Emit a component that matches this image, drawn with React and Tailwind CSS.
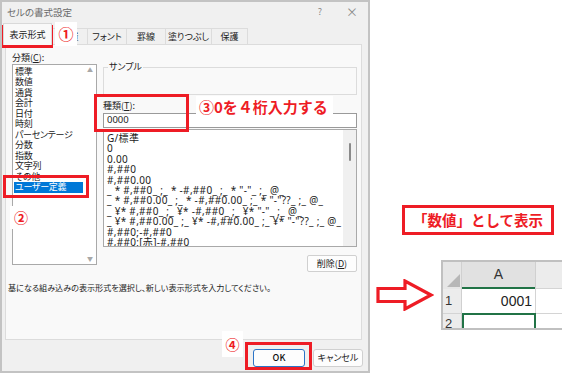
import React from "react";

const JP = "font-['Noto_Sans_CJK_JP','Noto_Sans',sans-serif] [font-feature-settings:'palt']";
const JPF = "font-['Noto_Sans_CJK_JP','Noto_Sans',sans-serif]";

const categories = [
  "標準", "数値", "通貨", "会計", "日付", "時刻", "パーセンテージ",
  "分数", "指数", "文字列", "その他", "ユーザー定義",
];

const formats = [
  "G/標準",
  "0",
  "0.00",
  "#,##0",
  "#,##0.00",
  '_ * #,##0_ ;_ * -#,##0_ ;_ * "-"_ ;_ @_',
  '_ * #,##0.00_ ;_ * -#,##0.00_ ;_ * "-"??_ ;_ @_',
  '_ ¥* #,##0_ ;_ ¥* -#,##0_ ;_ ¥* "-"_ ;_ @_',
  '_ ¥* #,##0.00_ ;_ ¥* -#,##0.00_ ;_ ¥* "-"??_ ;_ @_',
  "#,##0;-#,##0",
  "#,##0;[赤]-#,##0",
];

function Tab({ label, w, active }) {
  if (active) {
    return (
      <div
        className={`${w} h-[22px] relative z-10 -mb-px flex items-center justify-center border border-b-0 border-[#d9d9d9] bg-[#f9f9f9] text-[9px] text-[#222]`}
      >
        {label}
      </div>
    );
  }
  return (
    <div
      className={`${w} h-[16px] flex items-center justify-center border border-l-0 border-b-0 border-[#dcdcdc] bg-[#f0f0f0] text-[9px] text-[#222]`}
    >
      {label}
    </div>
  );
}

function Dialog() {
  return (
    <div className={`w-[370px] h-[373px] shrink-0 border-2 border-[#c3c3c3] bg-[#f0f0f0] flex flex-col ${JP}`}>
      {/* title bar */}
      <div className="h-[20px] flex items-center pl-[5px] pr-[10px] text-[#6a6a6a]">
        <span className="text-[9.5px]">セルの書式設定</span>
        <span className="ml-auto text-[9px] text-[#8a8a8a] mr-[24px]">?</span>
        <span className="text-[12px] text-[#8a8a8a] leading-none">×</span>
      </div>
      {/* tabs */}
      <div className="h-[22px] flex items-end pl-px">
        <Tab label="表示形式" w="w-[49px]" active />
        <Tab label="配置" w="w-[36px]" />
        <Tab label="フォント" w="w-[39px]" />
        <Tab label="罫線" w="w-[39px]" />
        <Tab label="塗りつぶし" w="w-[46px]" />
        <Tab label="保護" w="w-[36px]" />
      </div>
      {/* panel */}
      <div className="ml-[3px] w-[357px] h-[296px] border border-[#dcdcdc] bg-[#f9f9f9] flex flex-col">
        <div className="flex pl-[6px] pt-[7px]">
          {/* left column */}
          <div className="w-[85px] flex flex-col">
            <div className="h-[12px] text-[9px] leading-[12px] text-[#222]">
              分類(<span className="underline">C</span>):
            </div>
            <div className="h-[201px] border border-[#a9a9a9] bg-white flex">
              <div className="flex-1 pt-[1.5px] pl-px">
                {categories.map((c) => (
                  <div
                    key={c}
                    className={`h-[10.5px] leading-[10.5px] text-[9px] tracking-[-0.3px] pl-[1px] ${
                      c === "ユーザー定義" ? "bg-[#0078d7] text-white w-[69px]" : "text-[#222]"
                    }`}
                  >
                    {c}
                  </div>
                ))}
              </div>
              <div className="w-[12px] flex flex-col items-center justify-between py-[2px] text-[6px] text-[#a8a8a8] leading-none">
                <span>▲</span>
                <span>▼</span>
              </div>
            </div>
          </div>
          {/* right column */}
          <div className="ml-[6px] w-[254px] flex flex-col">
            <fieldset className="mt-[10px] h-[33px] border border-[#dcdcdc] px-[3px]">
              <legend className="px-[1px] ml-[1px] text-[9px] leading-[10px] text-[#222]">サンプル</legend>
            </fieldset>
            <div className="mt-[4px] h-[13px] text-[9px] leading-[13px] text-[#222]">
              種類(<span className="underline">T</span>):
            </div>
            <div className="mt-[1px] h-[15px] border border-[#9a9a9a] bg-white flex items-center pl-[3px] text-[9.5px] text-[#222] font-['Noto_Sans',sans-serif]">
              0000
            </div>
            <div className="mt-px h-[118px] border border-[#a9a9a9] bg-white flex overflow-hidden">
              <div className="flex-1 pt-[3px] pl-[3px] overflow-hidden">
                {formats.map((f, i) => (
                  <div
                    key={i}
                    className="h-[10.4px] leading-[10.4px] text-[10px] tracking-[0.3px] whitespace-pre text-[#222] font-['Noto_Sans','Noto_Sans_CJK_JP',sans-serif]"
                  >
                    {f}
                  </div>
                ))}
              </div>
              <div className="w-[13px] bg-[#f0f0f0] flex justify-center pt-[13px]">
                <div className="w-[2px] h-[18px] bg-[#8a8a8a] rounded-full" />
              </div>
            </div>
            <div className="mt-[8px] self-end w-[50px] h-[17px] border border-[#d0d0d0] rounded-[2px] bg-[#fdfdfd] flex items-center justify-center text-[9px] text-[#222]">
              削除(<span className="underline">D</span>)
            </div>
          </div>
        </div>
        <div className="mt-[10px] pl-[2px] text-[8.1px] leading-[11px] text-[#222] whitespace-nowrap">
          基になる組み込みの表示形式を選択し、新しい表示形式を入力してください。
        </div>
      </div>
      {/* buttons */}
      <div className="flex-1 flex justify-end items-start pt-[9px] pr-[5px] gap-[8px]">
        <div className="w-[52px] h-[18px] border border-[#2b74c7] rounded-[3px] bg-[#fdfdfd] flex items-center justify-center text-[9px] font-medium text-[#111]">
          OK
        </div>
        <div className="w-[50px] h-[18px] border border-[#d0d0d0] rounded-[3px] bg-[#fdfdfd] flex items-center justify-center text-[9px] text-[#222]">
          キャンセル
        </div>
      </div>
    </div>
  );
}

function Excel() {
  return (
    <div className="w-[121px] h-[70px] border-2 border-r-0 border-[#c0c0c0] bg-white overflow-hidden font-['Liberation_Sans',sans-serif] text-[#222]">
      {/* header row */}
      <div className="flex h-[27px]">
        <div className="w-[19px] bg-[#e6e6e6] border-r border-[#d0d0d0] relative">
          <svg width="19" height="27" className="block">
            <polygon points="17,12 17,25 4,25" fill="#b7b7b7" />
          </svg>
        </div>
        <div className="w-[73px] bg-[#e1e1e1] border-b-2 border-[#217346] flex items-center justify-center text-[14px] text-[#333]">
          A
        </div>
        <div className="flex-1 bg-[#ececec] border-l border-[#d0d0d0] border-b border-b-[#d4d4d4]" />
      </div>
      {/* row 1 */}
      <div className="flex h-[25px] border-b border-[#d4d4d4]">
        <div className="w-[19px] bg-[#ececec] border-r border-[#d0d0d0] flex items-center pl-[2px] text-[13px] text-[#333]">
          1
        </div>
        <div className="w-[73px] flex items-center justify-end pr-[3px] text-[14px] text-[#222]">0001</div>
        <div className="flex-1 border-l border-[#d4d4d4]" />
      </div>
      {/* row 2 */}
      <div className="flex h-[16px]">
        <div className="w-[19px] bg-[#ececec] border-r border-[#d0d0d0] pl-[2px] text-[13px] leading-[20px] text-[#333]">
          2
        </div>
        <div className="w-[74px] border-2 border-b-0 border-[#217346] -mt-px" />
        <div className="flex-1" />
      </div>
    </div>
  );
}

export default function App() {
  const red = "border-[#ee1c25]";
  return (
    <div className="relative w-[562px] h-[373px] bg-white flex overflow-hidden">
      <Dialog />
      {/* right side */}
      <div className="flex-1 flex flex-col">
        <div className={`mt-[205px] ml-[32px] w-[152px] h-[30px] border-[3px] ${red} bg-white flex items-center justify-center text-[14.5px] font-bold text-[#ee1c25] whitespace-nowrap ${JPF}`}>
          「数値」として表示
        </div>
        <div className="mt-[25px] flex items-start">
          <svg width="58" height="32" className="ml-[6px] mt-[19px] block" viewBox="0 0 58 32">
            <polygon
              points="2,9.5 29,9.5 29,2 55,16 29,30 29,22.5 2,22.5"
              fill="white"
              stroke="#ee1c25"
              strokeWidth="3.2"
              strokeLinejoin="miter"
            />
          </svg>
          <div className="ml-auto">
            <Excel />
          </div>
        </div>
      </div>

      {/* annotations */}
      <div className={`absolute left-[2px] top-[25px] w-[51px] h-[23px] border-[3px] ${red}`} />
      <div className={`absolute left-[55px] top-[22px] w-[22px] h-[24px] bg-white flex items-center justify-center text-[15px] font-bold text-[#ee1c25] ${JPF}`}>
        ①
      </div>
      <div className={`absolute left-[3px] top-[175px] w-[86px] h-[23px] border-[3px] ${red}`} />
      <div className={`absolute left-[10px] top-[206px] w-[22px] h-[23px] bg-white flex items-center justify-center text-[14px] font-bold text-[#ee1c25] ${JPF}`}>
        ②
      </div>
      <div className={`absolute left-[94px] top-[94px] w-[95px] h-[38px] border-[3px] ${red}`} />
      <div className={`absolute left-[196px] top-[96px] w-[137px] h-[23px] bg-white flex items-center pl-[3px] text-[15px] font-bold text-[#ee1c25] whitespace-nowrap ${JPF}`}>
        ③0を４桁入力する
      </div>
      <div className={`absolute left-[245px] top-[342px] w-[67px] h-[28px] border-[3px] ${red}`} />
      <div className={`absolute left-[222px] top-[331px] w-[21px] h-[26px] bg-white flex items-start pt-[3px] justify-center text-[14px] font-bold text-[#ee1c25] ${JPF}`}>
        ④
      </div>
    </div>
  );
}
